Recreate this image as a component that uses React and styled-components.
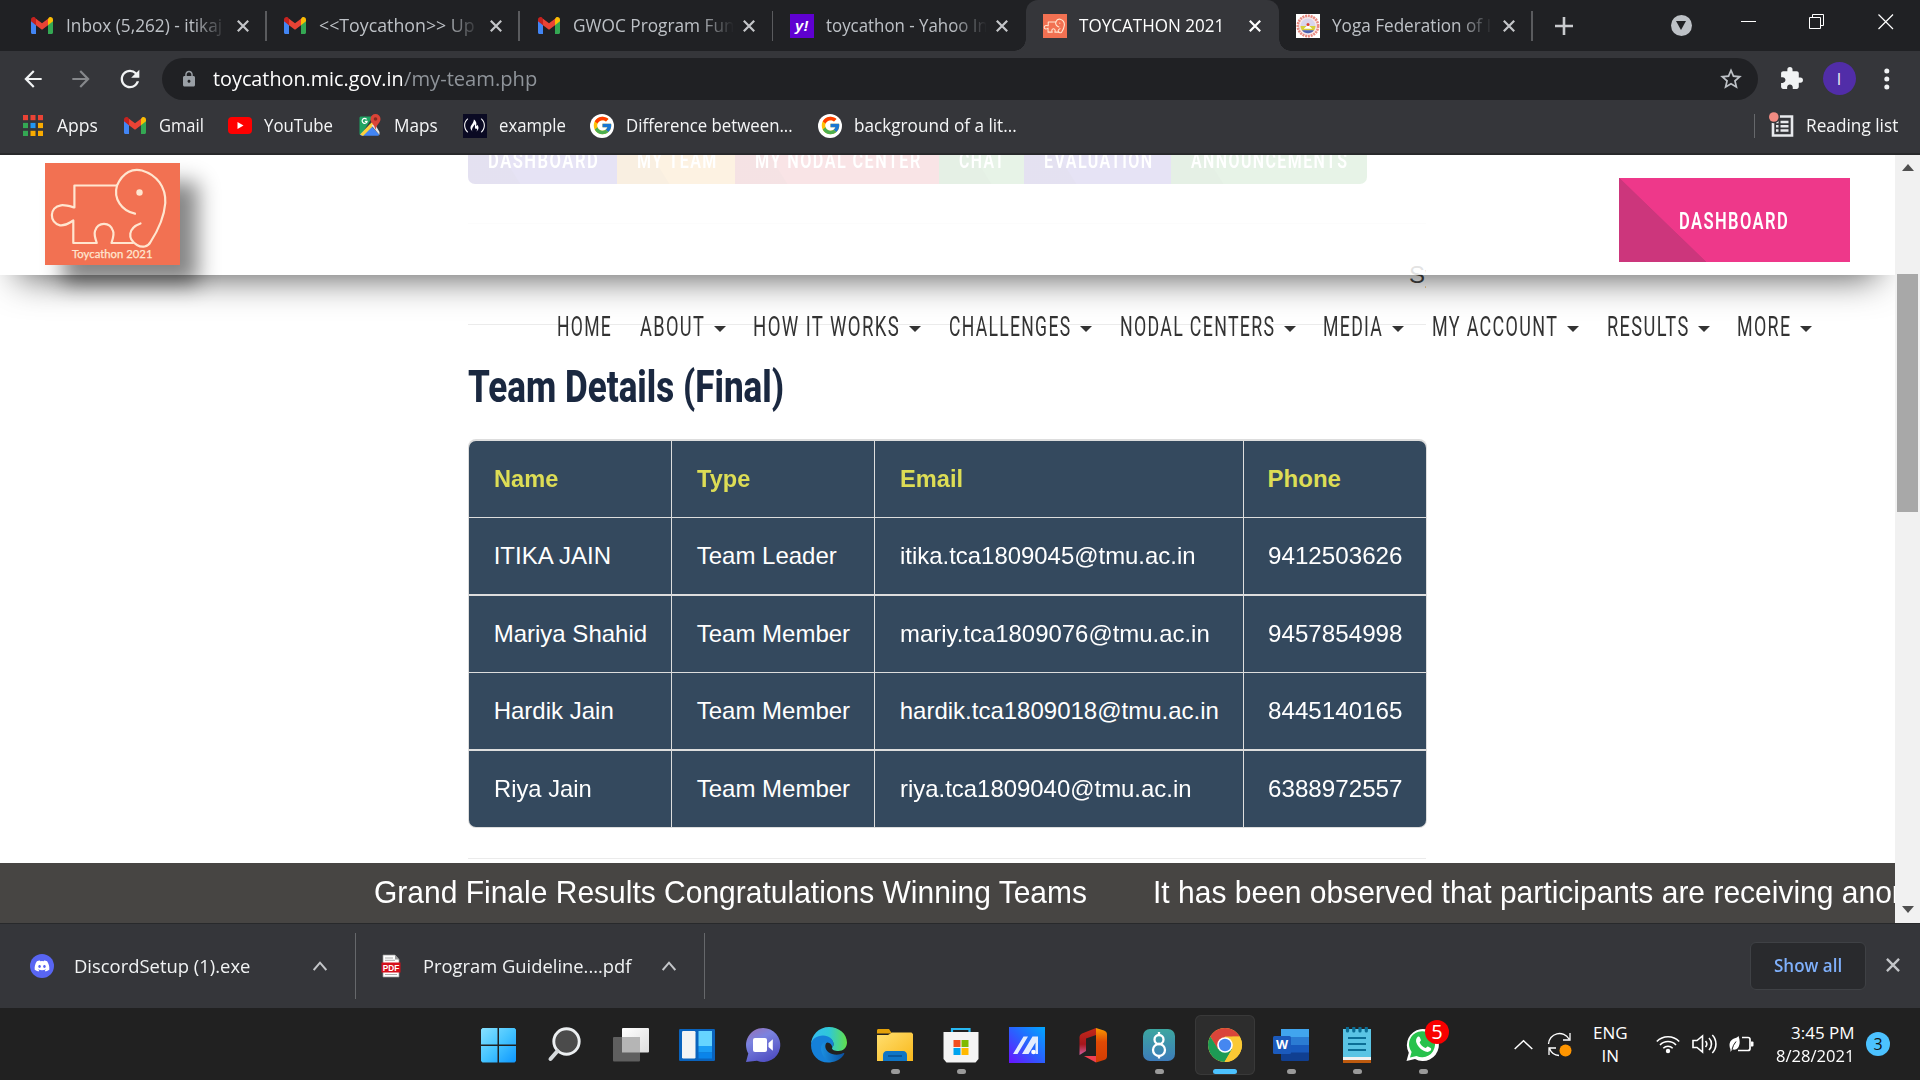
import React, { useLayoutEffect, useRef, useState } from "react";
import styled, { createGlobalStyle, css } from "styled-components";
import { MdArrowBack, MdArrowForward, MdRefresh, MdLock, MdStarBorder, MdExtension } from "react-icons/md";
import { FcGoogle } from "react-icons/fc";
import { FaDiscord, FaFreeCodeCamp } from "react-icons/fa";

const ui = `"Open Sans", "Noto Sans", sans-serif`;
const arial = `"Liberation Sans", Arial, sans-serif`;
const condensed = `Roboto, "Open Sans", sans-serif`;

const GlobalStyle = createGlobalStyle`
  * { box-sizing: border-box; }
  body { margin: 0; overflow: hidden; background: #202020; }
  svg { display: block; flex: none; }
`;

/* Text squeezed or stretched to a known width */
const FitBox = styled.span`
  display: block;
  flex: none;
  white-space: nowrap;
  line-height: 1.36;
`;
const FitInner = styled.span`
  display: inline-block;
  transform-origin: 0 50%;
`;
function Fit({ w, children, className }) {
  const ref = useRef(null);
  const [scale, setScale] = useState(1);
  useLayoutEffect(() => {
    const el = ref.current;
    const ls = parseFloat(getComputedStyle(el).letterSpacing) || 0;
    setScale(w / (el.offsetWidth - ls));
  }, [w]);
  return (
    <FitBox className={className} style={{ width: w }}>
      <FitInner ref={ref} style={{ transform: `scaleX(${scale})` }}>{children}</FitInner>
    </FitBox>
  );
}

const Screen = styled.div`
  width: 1920px;
  height: 1080px;
  display: flex;
  flex-direction: column;
  overflow: hidden;
  font-family: ${ui};
`;

/* ---------- tab strip ---------- */
const TabStrip = styled.div`
  height: 51px;
  flex: none;
  display: flex;
  padding-left: 13.5px;
  background: #202124;
`;
const Tab = styled.div`
  position: relative;
  width: 253.2px;
  flex: none;
  display: flex;
  align-items: center;
  padding-left: 16.7px;
  color: ${(p) => (p.$active ? "#fff" : "#bdc1c6")};
  ${(p) => p.$active && css`
    background: #35363a;
    border-radius: 12px 12px 0 0;
    &::before, &::after {
      content: "";
      position: absolute;
      bottom: 0;
      width: 12px;
      height: 12px;
    }
    &::before { left: -12px; background: radial-gradient(circle at 0 0, transparent 11.5px, #35363a 12px); }
    &::after { right: -12px; background: radial-gradient(circle at 100% 0, transparent 11.5px, #35363a 12px); }
  `}
`;
const TabIcon = styled.div`
  width: 24px;
  height: 24px;
  margin-right: 12px;
  display: flex;
  align-items: center;
  justify-content: center;
`;
const TabTitle = styled.div`
  width: 160px;
  overflow: hidden;
  font-size: 18px;
  ${(p) => p.$fade && css`mask-image: linear-gradient(90deg, #000 126px, transparent 161px);`}
`;
const TabClose = styled.div`margin-left: 10.5px;`;
const TabLine = styled.div`
  width: 1.5px;
  height: 30px;
  margin: 0 0 0 auto;
  background: #5a5b5e;
`;
const NewTab = styled.div`
  display: flex;
  align-items: center;
  padding-left: 22.500px;
  width: 139px;
  flex: none;
`;
const WindowControls = styled.div`
  display: flex;
  flex: none;
  width: 248px;
  padding-top: 13px;
  align-items: flex-start;
`;
const TabSearch = styled.div`
  width: 21px;
  height: 21px;
  flex: none;
  margin: 2px 49px 0 -1px;
  border-radius: 50%;
  background: #bdc1c6;
  display: flex;
  align-items: center;
  justify-content: center;
`;
const Control = styled.div`
  width: 68.5px;
  flex: none;
`;

/* ---------- toolbar ---------- */
const Toolbar = styled.div`
  height: 55px;
  flex: none;
  display: flex;
  align-items: center;
  background: #35363a;
  color: #f1f3f4;
`;
const NavIcons = styled.div`
  width: 162px;
  display: flex;
  align-items: center;
  gap: 22px;
  padding-left: 20px;
  & svg:nth-child(2) { color: #86888b; }
`;
const Omnibox = styled.div`
  width: 1596px;
  height: 42px;
  display: flex;
  align-items: center;
  border-radius: 21px;
  background: #202124;
  padding: 0 14px 0 18px;
  font-size: 20px;
  color: #fff;
  & > svg:first-child { color: #9aa0a6; margin-right: 15px; }
  & > svg:last-child { color: #bdc1c6; margin-left: auto; }
`;
const UrlPath = styled.div`color: #8f949a;`;
const ToolIcons = styled.div`
  display: flex;
  align-items: center;
  padding-left: 20.500px;
`;
const Avatar = styled.div`
  width: 33px;
  height: 33px;
  border-radius: 50%;
  margin: 0 28.500px 0 19px;
  background: #512da8;
  display: flex;
  align-items: center;
  justify-content: center;
  font-size: 16px;
`;

/* ---------- bookmarks ---------- */
const Bookmarks = styled.div`
  height: 49px;
  flex: none;
  display: flex;
  align-items: center;
  padding: 0 22px 8px 21px;
  gap: 24.8px;
  background: #35363a;
  border-bottom: 2px solid #28292b;
  color: #f4f5f6;
  font-size: 18px;
`;
const Bookmark = styled.div`
  display: flex;
  align-items: center;
  gap: 11.9px;
`;
const IconBox = styled.div`
  width: 24px;
  height: 24px;
  display: flex;
  align-items: center;
  justify-content: center;
  background: ${(p) => p.$bg || "transparent"};
  border-radius: ${(p) => p.$radius || 0};
  color: #fff;
  font: 900 italic 15px/1 ${arial};
`;
const ReadingList = styled(Bookmark)`
  margin-left: auto;
  height: 24px;
  padding-left: 14px;
  border-left: 1px solid #66686b;
`;

/* ---------- page ---------- */
const Viewport = styled.div`
  height: 768px;
  flex: none;
  display: flex;
  background: #fff;
`;
const Page = styled.main`
  position: relative;
  width: 1895px;
  height: 768px;
  overflow: hidden;
  display: flex;
  flex-direction: column;
`;
const Content = styled.section`
  width: 958px;
  height: 708px;
  margin-left: 468px;
`;
const Pills = styled.div`
  display: flex;
  height: 29px;
  border-radius: 0 0 7px 7px;
  overflow: hidden;
  width: 899px;
`;
const Pill = styled.div`
  width: ${(p) => p.$w}px;
  height: 29px;
  padding-left: 20px;
  background: linear-gradient(58deg, rgba(0,0,0,.13) 44px, transparent 45px), ${(p) => p.$bg};
  color: #fff;
  font: 600 22.5px ${condensed};
  letter-spacing: 2px;
`;
const PillText = styled(Fit)`margin-top: -10px;`;
const Rule = styled.div`
  height: 1px;
  background: #ebebeb;
  margin-top: ${(p) => p.$top}px;
`;
const Scroller = styled.div`
  height: 34px;
  margin-top: 34px;
  padding-left: 941px;
  overflow: hidden;
  font: 24px/34px ${arial};
  color: #444;
  white-space: nowrap;
`;
const Heading = styled.h2`
  margin: 33px 0 0;
  font: 800 44px/60px ${condensed};
  color: #1a2840;
`;
const Table = styled.div`
  width: 959px;
  margin-top: 21px;
  padding: 2px 1px 1px;
  background: #ddd;
  border-radius: 8px;
  overflow: hidden;
`;
const Row = styled.div`
  display: grid;
  grid-template-columns: 202px 202px 368px 1fr;
  gap: 1px;
  margin-top: ${(p) => p.$gap}px;
  font: ${(p) => (p.$head ? 700 : 400)} 24px/1.15 ${arial};
  color: ${(p) => (p.$head ? "#dddd55" : "#fff")};
  &:first-child > :first-child { border-top-left-radius: 7px; }
  &:first-child > :last-child { border-top-right-radius: 7px; }
  &:last-child > :first-child { border-bottom-left-radius: 7px; }
  &:last-child > :last-child { border-bottom-right-radius: 7px; }
`;
const Cell = styled.div`
  height: 76px;
  display: flex;
  align-items: center;
  padding-left: 24.7px;
  background: #34495e;
  &:last-child { padding-left: 23.6px; }
`;
const Header = styled.header`
  position: absolute;
  inset: 0 0 auto 0;
  height: 120px;
  display: flex;
  justify-content: space-between;
  padding: 8px 45px;
  background: rgba(255, 255, 255, 0.85);
  box-shadow: 0 20px 36px -18px rgba(0, 0, 0, 0.68);
`;
const Logo = styled.div`
  width: 135px;
  height: 102px;
  background: #f27152;
  box-shadow: 18px 19px 20px rgba(0, 0, 0, 0.48);
`;
const HeaderButton = styled.div`
  position: relative;
  width: 231px;
  height: 84px;
  margin-top: 15px;
  display: flex;
  align-items: center;
  justify-content: center;
  padding: 3px 2px 0 0;
  background: linear-gradient(to top right, #cc367c 50%, #ee388a 50.6%) 0 0 / 87px 84px no-repeat, #ee388a;
  color: #fff;
  font: 600 23.5px ${condensed};
  letter-spacing: 2px;
`;
const Menu = styled.nav`
  position: absolute;
  left: 557px;
  top: 152px;
  height: 40px;
  display: flex;
  align-items: center;
  color: #333;
  font: 400 27px ${condensed};
  letter-spacing: 2px;
`;
const MenuItem = styled.div`
  display: flex;
  align-items: center;
  margin-right: 27.7px;
  &:first-child { margin-right: 28.500px; }
`;
const Caret = styled.i`
  margin: 3px 0 0 10px;
  border: 6px solid transparent;
  border-top-color: #333;
  border-bottom: 0;
`;
const Ticker = styled.div`
  height: 60px;
  flex: none;
  display: flex;
  align-items: center;
  gap: 66.500px;
  padding-left: 373.5px;
  background: #474543;
  color: #fff;
  font: 30.5px ${arial};
`;
const Scrollbar = styled.div`
  width: 25px;
  display: flex;
  flex-direction: column;
  align-items: center;
  padding: 9px 0 10px;
  background: #f1f1f1;
`;
const ScrollArrow = styled.i`
  border: 6px solid transparent;
  ${(p) => (p.$up ? "border-bottom-color: #505050; border-top: 0; border-bottom-width: 7px;" : "border-top-color: #505050; border-bottom: 0; margin-top: auto; border-top-width: 7px;")}
`;
const Thumb = styled.div`
  width: 21px;
  height: 238px;
  margin-top: 103px;
  background: #a8a8a8;
`;

/* ---------- downloads ---------- */
const Downloads = styled.div`
  height: 85px;
  flex: none;
  display: flex;
  align-items: center;
  background: #35363a;
  border-top: 1px solid #28292b;
  color: #f1f3f4;
  font-size: 18px;
`;
const Download = styled.div`
  width: ${(p) => p.$w}px;
  height: 66px;
  display: flex;
  align-items: center;
  justify-content: space-between;
  padding: 0 28px 0 ${(p) => p.$pl}px;
  border-right: 1.5px solid #66686b;
`;
const DownloadName = styled.div`
  display: flex;
  align-items: center;
  gap: ${(p) => p.$gap}px;
`;
const ShowAll = styled.div`
  width: 116px;
  height: 48px;
  margin: 0 20.500px 1px auto;
  display: flex;
  align-items: center;
  justify-content: center;
  border: 1px solid #3f4145;
  border-radius: 6px;
  background: #292a2d;
  color: #7fb0fb;
  font-weight: 600;
  padding-bottom: 1px;
`;
const CloseShelf = styled.div`margin: 0 20px 2px 0;`;

/* ---------- taskbar ---------- */
const Taskbar = styled.div`
  height: 72px;
  flex: none;
  display: flex;
  justify-content: space-between;
  padding-left: 469px;
  background: #212121;
  color: #fff;
`;
const Apps = styled.div`
  display: flex;
  gap: 6px;
  padding-top: 7px;
`;
const AppTile = styled.div`
  position: relative;
  width: 60px;
  height: 60px;
  display: flex;
  align-items: center;
  justify-content: center;
  border-radius: 6px;
  ${(p) => p.$active && css`background: #2d2d2d; box-shadow: inset 0 0 0 1px #393939;`}
`;
const RunMark = styled.div`
  position: absolute;
  bottom: 1px;
  left: calc(50% - ${(p) => (p.$active ? 12 : 4.5)}px);
  width: ${(p) => (p.$active ? 24 : 9)}px;
  height: 5px;
  border-radius: 3px;
  background: ${(p) => (p.$active ? "#4cc2ff" : "#9a9a9a")};
`;
const Badge = styled.div`
  position: absolute;
  top: 5px;
  right: 4px;
  width: 24px;
  height: 24px;
  border-radius: 50%;
  background: #f90000;
  font-size: 20px;
  line-height: 24px;
  text-align: center;
`;
const Tray = styled.div`
  display: flex;
  align-items: center;
  width: 406px;
  font-size: 17px;
`;
const Stack = styled.div`
  display: flex;
  flex-direction: column;
  align-items: ${(p) => p.$align};
  width: ${(p) => p.$w}px;
  margin-left: ${(p) => p.$ml}px;
`;
const StackText = styled(Fit)`line-height: 23px;`;
const TrayIcons = styled.div`
  display: flex;
  gap: 12px;
  align-items: center;
  margin-left: 28px;
`;
const Count = styled.div`
  width: 24px;
  height: 24px;
  margin-left: 11px;
  border-radius: 50%;
  background: #4cc2ff;
  color: #111;
  font-size: 16px;
  line-height: 24px;
  text-align: center;
`;

/* ---------- drawings ---------- */
const Cross = ({ s = 12, c = "#c4c6c9", t = 2.2 }) => (
  <svg width={s} height={s} viewBox="0 0 12 12"><path d="M.8.8l10.4 10.4M11.2.8L.8 11.2" stroke={c} strokeWidth={t} fill="none" /></svg>
);
const GmailIcon = () => (
  <svg width="22" height="17" viewBox="0 0 22 17">
    <path d="M0 3v12.5C0 16.4.6 17 1.5 17H5V7.500L0 3.500z" fill="#4285f4" />
    <path d="M17 7.500V17h3.500c.9 0 1.500-.6 1.500-1.500V3.500z" fill="#34a853" />
    <path d="M17 1.700v6.500l5-3.900V2.500c0-2-2.300-3.200-4-2z" fill="#fbbc04" />
    <path d="M5 8.200V1.700l6 4.600 6-4.600v6.500l-6 4.600z" fill="#ea4335" />
    <path d="M0 2.500v1.800l5 3.900V1.700L4 .5C2.300-.7 0 .5 0 2.500z" fill="#c5221f" />
  </svg>
);
const ElephantLines = ({ t = 2.2, c = "#ffe6d0" }) => (
  <g fill="none" stroke={c} strokeWidth={t} strokeLinejoin="round" strokeLinecap="round">
    <path d="M72 22.500H29.400V44.500C24 43 20 41.700 16 42.300 4 44 4 60 15 62.300 21 63 24 60 28.300 57.500V80H51.800C50 75 49 71 50 68 53 58.500 65 58.500 68 68 69.500 71 68 75 66.500 80H88" />
    <path d="M90 50.700C77 48 68 36 72 22.500 78 9 88 5 97 7.500 112 12 121 24 120.300 40 119 56 112 69 105.500 79 103 84 97 85 92 82 82 76 83 65 95.500 60.500" />
    <circle cx="94.500" cy="29.500" r="3.200" fill={c} stroke="none" />
  </g>
);
const ToyIcon = () => (
  <svg width="24" height="24" viewBox="0 -22 135 135"><rect y="-22" width="135" height="135" fill="#f27152" /><ElephantLines t={6} /></svg>
);
const YahooIcon = () => <IconBox $bg="#5f01d1">y!</IconBox>;
const YogaIcon = () => (
  <svg width="24" height="24" viewBox="0 0 24 24">
    <rect width="24" height="24" fill="#fff" />
    <circle cx="12" cy="12" r="10.200" fill="#f6e7e9" stroke="#e88a80" strokeWidth="2.600" strokeDasharray="2 .8" />
    <circle cx="12" cy="12" r="7.500" fill="#d9d5ec" />
    <path d="M4.500 12h15a7.500 7.500 0 0 1-1.500 4.500H6a7.500 7.500 0 0 1-1.500-4.500z" fill="#d6cf3a" />
    <path d="M6 16.200h12a7.500 7.500 0 0 1-12 0z" fill="#4c60b0" />
    <path d="M12 9l1.300 3 3 2.800H7.700l3-2.800z" fill="#fff" /><circle cx="12" cy="10.500" r="1.500" fill="#e0402e" />
  </svg>
);
const AppsGrid = () => {
  const cols = ["#ea4335", "#ea4335", "#ea4335", "#34a853", "#2196f3", "#f9ab00", "#34a853", "#f9ab00", "#f9ab00"];
  return <svg width="20" height="21" viewBox="0 0 20 21">{cols.map((c, i) => <rect key={i} x={(i % 3) * 7.500} y={Math.floor(i / 3) * 7.900} width="5" height="5.200" fill={c} />)}</svg>;
};
const YouTubeIcon = () => (
  <svg width="24" height="17" viewBox="0 0 24 17"><rect width="24" height="17" rx="4" fill="#f00" /><path d="M9.500 5l6 3.500-6 3.500z" fill="#fff" /></svg>
);
const MapsIcon = () => (
  <svg width="22" height="23" viewBox="0 0 22 23">
    <path d="M2 2.500h12L2 21C1 21 .5 20.500.5 19.500V4c0-1 .5-1.500 1.500-1.500z" fill="#1fa463" />
    <path d="M1 20.500L11 10.500l9 10c0 1-.5 1.300-1.300 1.300H2z" fill="#4285f4" />
    <path d="M1 20.500L14 7l2 3L4 22z" fill="#fdd13c" /><path d="M12.500 11.500l3-2 5 8.500v3z" fill="#e6e6e6" />
    <path d="M16.500 0a5 5 0 0 1 5 5c0 4-4 5-5 11-1-6-5-7-5-11a5 5 0 0 1 5-5z" fill="#db4437" />
    <circle cx="16.500" cy="5" r="1.800" fill="#872a20" />
    <path d="M7.600 5.300A2.500 2.500 0 1 0 8.100 7.300H5.800" stroke="#fff" fill="none" strokeWidth="1.200" />
  </svg>
);
const ReadingIcon = () => (
  <svg width="25" height="27" viewBox="0 0 25 27">
    <path d="M5 4.500h18v19H4v-13" fill="none" stroke="#e8eaed" strokeWidth="2.600" />
    <path d="M11.500 10h8M11.500 14.200h8M11.500 18.500h8" stroke="#e8eaed" strokeWidth="2.400" />
    <path d="M7 10h2.500M7 14.200h2.500M7 18.500h2.500" stroke="#e8eaed" strokeWidth="2.400" />
    <circle cx="4.800" cy="5" r="6.200" fill="#35363a" /><circle cx="4.800" cy="5" r="4.800" fill="#f28b82" />
  </svg>
);
const PdfIcon = () => (
  <svg width="20" height="24" viewBox="0 0 20 24">
    <path d="M2 1h12l4 4.500V23H2z" fill="#fff" stroke="#999" strokeWidth=".7" /><path d="M14 1v4.500h4z" fill="#999" />
    <path d="M4 4h8M4 6.300h10M4 20.500h12" stroke="#aaa" />
    <rect x=".5" y="8.500" width="19" height="10" fill="#d6101c" />
    <text x="10" y="16.700" fontFamily="Liberation Sans, sans-serif" fontWeight="700" fontSize="8.300" textAnchor="middle" fill="#fff">PDF</text>
  </svg>
);
const Chevron = ({ w = 14, h = 8, t = 2, c = "#c4c6c9" }) => (
  <svg width={w} height={h + 2} viewBox={`0 -1 ${w} ${h + 2}`}><path d={`M.7 ${h}L${w / 2} .7 ${w - 0.7} ${h}`} stroke={c} strokeWidth={t} fill="none" /></svg>
);

const Ic = ({ children }) => <svg width="36" height="36" viewBox="0 0 36 36">{children}</svg>;
const icons = {
  windows: (
    <Ic>
      <defs><linearGradient id="win" gradientUnits="userSpaceOnUse" x1="0" y1="0" x2="36" y2="36"><stop stopColor="#8ae3ff" /><stop offset=".5" stopColor="#45c4ff" /><stop offset="1" stopColor="#0b95ff" /></linearGradient></defs>
      <path d="M1.500 1H16.500v16.500H0V2.500zM18 1H33.500l1.500 1.500v15h-17zM0 19h16.500v16.500H1.500L0 34zM18 19h17v15L33.500 35.500H18z" fill="url(#win)" />
    </Ic>
  ),
  search: <Ic><circle cx="19.500" cy="14.500" r="12.700" fill="#4b4b4b" stroke="#eceff1" strokeWidth="2.900" /><path d="M10.500 24L3.500 32" stroke="#d5d9dc" strokeWidth="4" strokeLinecap="round" /></Ic>,
  taskview: (
    <Ic>
      <defs><linearGradient id="tv" x1="0" y1="0" x2="1" y2="1"><stop stopColor="#fff" /><stop offset="1" stopColor="#dedede" /></linearGradient></defs>
      <rect x="9" y="1" width="27" height="24.500" rx="1" fill="url(#tv)" /><rect x="0" y="10" width="27" height="24.500" rx="1" fill="#5f5f5f" /><path d="M9 10h18v15.500H9z" fill="#b5b5b5" />
    </Ic>
  ),
  widgets: (
    <Ic>
      <rect y="2" width="36" height="32" rx="1.200" fill="#0a63bd" /><rect x="3" y="4" width="13.500" height="27.500" rx="1.200" fill="#f4f4f4" />
      <rect x="19.500" y="4" width="13.500" height="15" fill="#66d4ff" /><rect x="19.500" y="19" width="13.500" height="6.500" fill="#1b9df5" /><rect x="19.500" y="25.500" width="13.500" height="6" fill="#0a84ea" />
    </Ic>
  ),
  chat: (
    <Ic>
      <defs><linearGradient id="chat" x1="0" y1="0" x2=".5" y2="1"><stop stopColor="#9a6fb0" /><stop offset=".4" stopColor="#7b83e0" /><stop offset="1" stopColor="#5352c4" /></linearGradient></defs>
      <path d="M18 1a17 17 0 1 1-6 32.800L1 35l2.300-8.500A17 17 0 0 1 18 1z" fill="url(#chat)" /><rect x="8" y="11" width="14" height="14" rx="2" fill="#fff" /><path d="M23.500 16l4.300-3.700v11.400L23.500 20z" fill="#fff" />
    </Ic>
  ),
  edge: (
    <Ic>
      <defs>
        <linearGradient id="e1" x1="0" x2="1"><stop stopColor="#35bdf2" /><stop offset=".5" stopColor="#2fc8d8" /><stop offset="1" stopColor="#62e04a" /></linearGradient>
        <linearGradient id="e2" x1="0" x2="1"><stop stopColor="#1a8fe0" /><stop offset="1" stopColor="#0b4f9e" /></linearGradient>
      </defs>
      <path d="M0 18C0 8 8 0 18 0s18 7 18 15.500c0 5-4 8.500-8.500 8.500-4 0-6.500-1.200-6.500-2.800 0-1 1.500-1.500 1.500-4C22.500 13 18 10 13 10 6 10 0 14 0 18z" fill="url(#e1)" />
      <path d="M0 18C.2 12 6 8.500 12 8.500c6 0 10.500 4 10.500 8.500 0 1.500-.5 2.500-1.200 3.300-.5-2.500-2-4.800-5-4.800-8 2-5.300 18.500 6.700 18.500-2 1.200-3.500 1.600-6 1.600C7.500 35.600 0 28 0 18z" fill="#1580d8" />
      <path d="M16.300 14.500c-6 0-7 6-5.500 11C12.500 31 17 35 22 34.800c5-.8 9-4 11.200-7.800.4-.8-.3-1.300-1-.9-2 1.200-4 1.600-6.500 1.600-6.500 0-11.400-4-11.400-8.200 0-2 .8-3.500 2-5z" fill="url(#e2)" />
    </Ic>
  ),
  explorer: (
    <Ic>
      <defs><linearGradient id="fold" x1="0" y1="0" x2="1" y2="1"><stop stopColor="#ffdf70" /><stop offset="1" stopColor="#f9b81b" /></linearGradient></defs>
      <path d="M0 3.500C0 2.500.7 2 1.500 2H12l3 4.500H0z" fill="#e3a008" /><path d="M0 8h11l4-2.500h19.500L36 7v27H0z" fill="url(#fold)" />
      <path d="M6 34v-6c0-2 1.500-4 4-4h16c2.500 0 4 2 4 4v6z" fill="#0f75c6" /><path d="M11 29h14" stroke="#0a4f8e" strokeWidth="1.500" />
    </Ic>
  ),
  store: (
    <Ic>
      <path d="M9 7V2h17.500v5" fill="none" stroke="#28b8f2" strokeWidth="2.200" /><path d="M.5 5h35v27l-3 3.500h-29l-3-3.500z" fill="#f4f4f4" />
      <rect x="10.500" y="13" width="7" height="7" fill="#f25022" /><rect x="18.500" y="13" width="7" height="7" fill="#7fba00" /><rect x="10.500" y="21" width="7" height="7" fill="#00a4ef" /><rect x="18.500" y="21" width="7" height="7" fill="#ffb900" />
    </Ic>
  ),
  myasus: (
    <Ic>
      <defs><linearGradient id="ma" x1="1" y1="0" x2="0" y2="1"><stop stopColor="#00a8ff" /><stop offset=".5" stopColor="#2a60ff" /><stop offset="1" stopColor="#6a12ff" /></linearGradient></defs>
      <path d="M0 0h36v36H0z" fill="url(#ma)" /><path d="M4 27L14.500 9.500h4.500L8.500 27zM13 27L23.500 9.500h5.500V27h-2.500V15.500L19.500 27z" fill="#e3ecff" /><circle cx="24.500" cy="25" r="2.300" fill="#fff" />
    </Ic>
  ),
  office: (
    <Ic>
      <defs>
        <linearGradient id="o1" x1="0" y1="0" x2="0" y2="1"><stop stopColor="#c22a1a" /><stop offset=".6" stopColor="#a6161c" /><stop offset="1" stopColor="#d060a0" /></linearGradient>
        <linearGradient id="o2" x1="0" y1="0" x2="0" y2="1"><stop stopColor="#fb9a00" /><stop offset=".4" stopColor="#e04a04" /><stop offset="1" stopColor="#d33c04" /></linearGradient>
      </defs>
      <path d="M21 1L7 6.500Q4.500 7.500 4.500 10V28l6.500-4V11.500L21 8z" fill="url(#o1)" /><path d="M21 1l8 2.500q3 1 3 4V29q0 3-3 4l-8 2.500z" fill="url(#o2)" /><path d="M9 29h12v6.500z" fill="#f04050" />
    </Ic>
  ),
  eight: (
    <Ic>
      <defs><linearGradient id="eight" x1="0" y1="0" x2="0" y2="1"><stop stopColor="#3ca6a0" /><stop offset="1" stopColor="#3d7cba" /></linearGradient></defs>
      <rect x="2" y="2" width="32" height="32" rx="7" fill="url(#eight)" />
      <g fill="none" stroke="#fff" strokeWidth="2.300"><circle cx="18" cy="12.500" r="4.500" /><circle cx="18" cy="23" r="6" /><path d="M18 8V5M18 29v2.500" /></g>
    </Ic>
  ),
  chrome: (
    <Ic>
      <circle cx="18" cy="18" r="17" fill="#fbc934" />
      <path d="M3.300 9.500A17 17 0 0 1 32.700 9.500H18l-7.500 12.500z" fill="#d9453a" /><path d="M3.300 9.500A17 17 0 0 0 17.500 35L25 22h-14z" fill="#1d9b55" /><path d="M32.800 9.700A17 17 0 0 1 17.500 35L25.300 22V9.700z" fill="#fbc934" />
      <circle cx="18" cy="18" r="7.800" fill="#fff" /><circle cx="18" cy="18" r="6.200" fill="#4587f0" />
    </Ic>
  ),
  word: (
    <Ic>
      <rect x="8" y="2" width="28" height="32" rx="1.500" fill="#103f91" /><path d="M8 2h28v8H8z" fill="#41a5ee" /><path d="M8 10h28v8H8z" fill="#2b7cd3" /><path d="M8 18h28v7.500H8z" fill="#185abd" />
      <rect y="9" width="18" height="18" rx="1.500" fill="#1b5abc" /><text x="9" y="22.300" fill="#fff" textAnchor="middle" fontFamily="Open Sans, sans-serif" fontWeight="700" fontSize="12.500">W</text>
    </Ic>
  ),
  notepad: (
    <Ic>
      <rect x="4" y="2" width="28" height="32" fill="#f1f1f1" /><rect x="4" y="2" width="28" height="28" fill="#5ac4e4" /><rect x="4" y="33" width="28" height="3" fill="#bd5a0e" />
      <path d="M9 11h18M9 17h18M9 23h18" stroke="#0b6e96" strokeWidth="2" /><path d="M8.500 1v3M14.800 1v3M21 1v3M27.300 1v3" stroke="#0b6e96" strokeWidth="3.200" strokeLinecap="round" />
    </Ic>
  ),
  whatsapp: (
    <Ic>
      <path d="M1.500 34l2.300-8.300A16 16 0 1 1 10 32z" fill="#fff" /><path d="M5 30.500l1.600-5.500A13 13 0 1 1 11.500 29z" fill="#27c24c" />
      <path d="M12.500 10c1-.8 2-.5 2.400.5l1 2.500c.3.8-1.400 2-1.200 2.600 1 2.300 3 4.300 5.700 5.400.8.200 1.700-1.800 2.500-1.400l2.700 1.300c1 .5.600 2-.2 2.900-2 1.800-4.500 1.200-7.200-.2-3.400-1.900-5.600-4.700-6.800-7.800-.7-2-.3-4.600 1.100-5.800z" fill="#fff" />
    </Ic>
  ),
};

const tabs = [
  { icon: <GmailIcon />, title: "Inbox (5,262) - itikaj", w: 156 },
  { icon: <GmailIcon />, title: "<<Toycathon>> Up", w: 156 },
  { icon: <GmailIcon />, title: "GWOC Program Fun", w: 162 },
  { icon: <YahooIcon />, title: "toycathon - Yahoo In", w: 162, last: true },
  { icon: <ToyIcon />, title: "TOYCATHON 2021", w: 145, active: true },
  { icon: <YogaIcon />, title: "Yoga Federation of I", w: 159 },
];
const bookmarks = [
  [<AppsGrid />, "Apps", 41],
  [<GmailIcon />, "Gmail", 45],
  [<YouTubeIcon />, "YouTube", 69],
  [<MapsIcon />, "Maps", 44],
  [<IconBox $bg="#0a0a23"><FaFreeCodeCamp size={21} /></IconBox>, "example", 67],
  [<IconBox $bg="#fff" $radius="50%"><FcGoogle size={21} /></IconBox>, "Difference between...", 167],
  [<IconBox $bg="#fff" $radius="50%"><FcGoogle size={21} /></IconBox>, "background of a lit...", 163],
];
const pills = [
  ["DASHBOARD", 149, 110, "#5844bc"], ["MY TEAM", 118, 79, "#f2a83e"], ["MY NODAL CENTER", 204, 165, "#d74b58"],
  ["CHAT", 85, 45, "#5faf5f"], ["EVALUATION", 147, 108, "#5844bc"], ["ANNOUNCEMENTS", 196, 156, "#5faf5f"],
];
const menu = [
  ["HOME", 54, false], ["ABOUT", 64, true], ["HOW IT WORKS", 146, true], ["CHALLENGES", 121, true], ["NODAL CENTERS", 154, true],
  ["MEDIA", 59, true], ["MY ACCOUNT", 125, true], ["RESULTS", 81, true], ["MORE", 53, true],
];
const rows = [
  [["Name", 64], ["Type", 53], ["Email", 63], ["Phone", 73]],
  [["ITIKA JAIN", 117], ["Team Leader", 140], ["itika.tca1809045@tmu.ac.in", 296], ["9412503626", 134]],
  [["Mariya Shahid", 153], ["Team Member", 153], ["mariy.tca1809076@tmu.ac.in", 310], ["9457854998", 134]],
  [["Hardik Jain", 120], ["Team Member", 153], ["hardik.tca1809018@tmu.ac.in", 319], ["8445140165", 134]],
  [["Riya Jain", 98], ["Team Member", 153], ["riya.tca1809040@tmu.ac.in", 292], ["6388972557", 134]],
];
const apps = [
  ["windows"], ["search"], ["taskview"], ["widgets"], ["chat"], ["edge"], ["explorer", 1], ["store", 1], ["myasus"], ["office"],
  ["eight", 1], ["chrome", 1], ["word", 1], ["notepad", 1], ["whatsapp", 1],
];

export default function App() {
  return (
    <Screen>
      <GlobalStyle />
      <TabStrip>
        {tabs.map((t, i) => (
          <Tab key={i} $active={t.active}>
            <TabIcon>{t.icon}</TabIcon>
            <TabTitle $fade={!t.active}><Fit w={t.w}>{t.title}</Fit></TabTitle>
            <TabClose><Cross c={t.active ? "#fff" : undefined} /></TabClose>
            {!t.active && !t.last && <TabLine />}
          </Tab>
        ))}
        <NewTab><svg width="18" height="18" viewBox="0 0 18 18"><path d="M9 0v18M0 9h18" stroke="#c9cbce" strokeWidth="2.600" /></svg></NewTab>
        <WindowControls>
          <TabSearch><svg width="10" height="9" viewBox="0 0 10 9"><path d="M0 0h10L5 9z" fill="#202124" /></svg></TabSearch>
          <Control><svg width="15" height="16"><path d="M0 8.500h15" stroke="#fff" /></svg></Control>
          <Control><svg width="16" height="17"><path d="M.5 4.500h11v11H.5zM3.500 4V1.500h11v11H12" fill="none" stroke="#fff" /></svg></Control>
          <Control><svg width="16" height="17"><path d="M.5 1.500l14.500 14.500M15 1.500L.5 16" stroke="#fff" strokeWidth="1.200" /></svg></Control>
        </WindowControls>
      </TabStrip>
      <Toolbar>
        <NavIcons><MdArrowBack size={26} /><MdArrowForward size={26} /><MdRefresh size={28} /></NavIcons>
        <Omnibox>
          <MdLock size={18} />
          <Fit w={191}>toycathon.mic.gov.in</Fit>
          <UrlPath><Fit w={133}>/my-team.php</Fit></UrlPath>
          <MdStarBorder size={26} />
        </Omnibox>
        <ToolIcons>
          <MdExtension size={25} />
          <Avatar>I</Avatar>
        </ToolIcons>
        <svg width="6" height="24" viewBox="0 0 6 24"><circle cx="2.800" cy="4" r="2.500" fill="#f1f3f4" /><circle cx="2.800" cy="12" r="2.500" fill="#f1f3f4" /><circle cx="2.800" cy="20" r="2.500" fill="#f1f3f4" /></svg>
      </Toolbar>
      <Bookmarks>
        {bookmarks.map(([icon, name, w], i) => (
          <Bookmark key={i}><IconBox>{icon}</IconBox><Fit w={w}>{name}</Fit></Bookmark>
        ))}
        <ReadingList><ReadingIcon /><Fit w={92}>Reading list</Fit></ReadingList>
      </Bookmarks>
      <Viewport>
        <Page>
          <Content>
            <Pills>
              {pills.map(([t, w, tw, bg]) => <Pill key={t} $w={w} $bg={bg}><PillText w={tw}>{t}</PillText></Pill>)}
            </Pills>
            <Rule $top={39} />
            <Scroller>System</Scroller>
            <Rule $top={32} />
            <Heading><Fit w={316}>Team Details (Final)</Fit></Heading>
            <Table>
              {rows.map((r, i) => (
                <Row key={i} $head={i === 0} $gap={[0, 1, 2, 1, 2][i]}>
                  {r.map(([t, w], j) => <Cell key={j}><Fit w={w}>{t}</Fit></Cell>)}
                </Row>
              ))}
            </Table>
            <Rule $top={30} />
          </Content>
          <Header>
            <Logo>
              <svg width="135" height="102" viewBox="0 0 135 102">
                <ElephantLines />
                <text x="27" y="95.300" textLength="80.500" lengthAdjust="spacingAndGlyphs" fill="#ffe6d0" fontFamily="Lato, sans-serif" fontWeight="400" stroke="#ffe6d0" strokeWidth=".25" fontSize="11.500">Toycathon 2021</text>
              </svg>
            </Logo>
            <HeaderButton><Fit w={109}>DASHBOARD</Fit></HeaderButton>
          </Header>
          <Menu>
            {menu.map(([t, w, c]) => <MenuItem key={t}><Fit w={w}>{t}</Fit>{c && <Caret />}</MenuItem>)}
          </Menu>
          <Ticker>
            <Fit w={713}>Grand Finale Results Congratulations Winning Teams</Fit>
            <Fit w={844}>It has been observed that participants are receiving anonymous</Fit>
          </Ticker>
        </Page>
        <Scrollbar><ScrollArrow $up /><Thumb /><ScrollArrow /></Scrollbar>
      </Viewport>
      <Downloads>
        <Download $w={356} $pl={30}>
          <DownloadName $gap={20}>
            <IconBox $bg="#5865f2" $radius="50%"><FaDiscord size={16} /></IconBox>
            <Fit w={176}>DiscordSetup (1).exe</Fit>
          </DownloadName>
          <Chevron />
        </Download>
        <Download $w={349} $pl={25}>
          <DownloadName $gap={22}><PdfIcon /><Fit w={209}>Program Guideline....pdf</Fit></DownloadName>
          <Chevron />
        </Download>
        <ShowAll><Fit w={68}>Show all</Fit></ShowAll>
        <CloseShelf><Cross s={14} t={2} /></CloseShelf>
      </Downloads>
      <Taskbar>
        <Apps>
          {apps.map(([n, run]) => (
            <AppTile key={n} $active={n === "chrome"}>
              {icons[n]}
              {run && <RunMark $active={n === "chrome"} />}
              {n === "whatsapp" && <Badge>5</Badge>}
            </AppTile>
          ))}
        </Apps>
        <Tray>
          <Chevron w={19} h={9} t={1.5} c="#fff" />
          <Stack $w={26} $ml={14} $align="center">
            <svg width="26" height="26" viewBox="0 0 26 26">
              <path d="M1.500 13A11 11 0 0 1 22 8M23 2v7h-7M2 24v-7h7M2.500 17.500A11 11 0 0 0 12 24.500" fill="none" stroke="#fff" strokeWidth="1.300" />
              <circle cx="18.500" cy="19.500" r="6" fill="#ff9500" />
            </svg>
          </Stack>
          <Stack $w={35} $ml={20} $align="center"><StackText w={35}>ENG</StackText><StackText w={18}>IN</StackText></Stack>
          <TrayIcons>
            <svg width="24" height="20" viewBox="0 0 24 20"><g fill="none" stroke="#fff" strokeWidth="1.600"><path d="M.8 7.500a15.500 15.500 0 0 1 22.400 0M4 11a11 11 0 0 1 16 0M7.300 14.200a6.500 6.500 0 0 1 9.400 0" /></g><circle cx="12" cy="17" r="2.200" fill="#fff" /></svg>
            <svg width="25" height="22" viewBox="0 0 25 22"><g fill="none" stroke="#fff" strokeWidth="1.600"><path d="M1 7.500h4L10.500 3v16L5 14.500H1z" /><path d="M13.500 8a4.500 4.500 0 0 1 0 6M17 5a8.500 8.500 0 0 1 0 12M20.300 2a13 13 0 0 1 0 18" /></g></svg>
            <svg width="25" height="20" viewBox="0 0 25 20">
              <path d="M13 3.500h6q2 0 2 2v9q0 2-2 2H9" fill="none" stroke="#fff" strokeWidth="1.700" /><path d="M22 7.500h1.500q1 0 1 1v3q0 1-1 1H22z" fill="#fff" />
              <path d="M1.500 15.500C-.5 11 .5 7 4 5c2.500-1 4.500-1.500 5.500-3 1.500 4 1.800 8-.3 11.500-1.600 2.300-4 2.500-5.900 1.800L1.500 18z" fill="#fff" /><path d="M3 15.500q1-4.500 4-8" fill="none" stroke="#212121" />
            </svg>
          </TrayIcons>
          <Stack $w={80} $ml={21} $align="flex-end"><StackText w={64}>3:45 PM</StackText><StackText w={79}>8/28/2021</StackText></Stack>
          <Count>3</Count>
        </Tray>
      </Taskbar>
    </Screen>
  );
}
